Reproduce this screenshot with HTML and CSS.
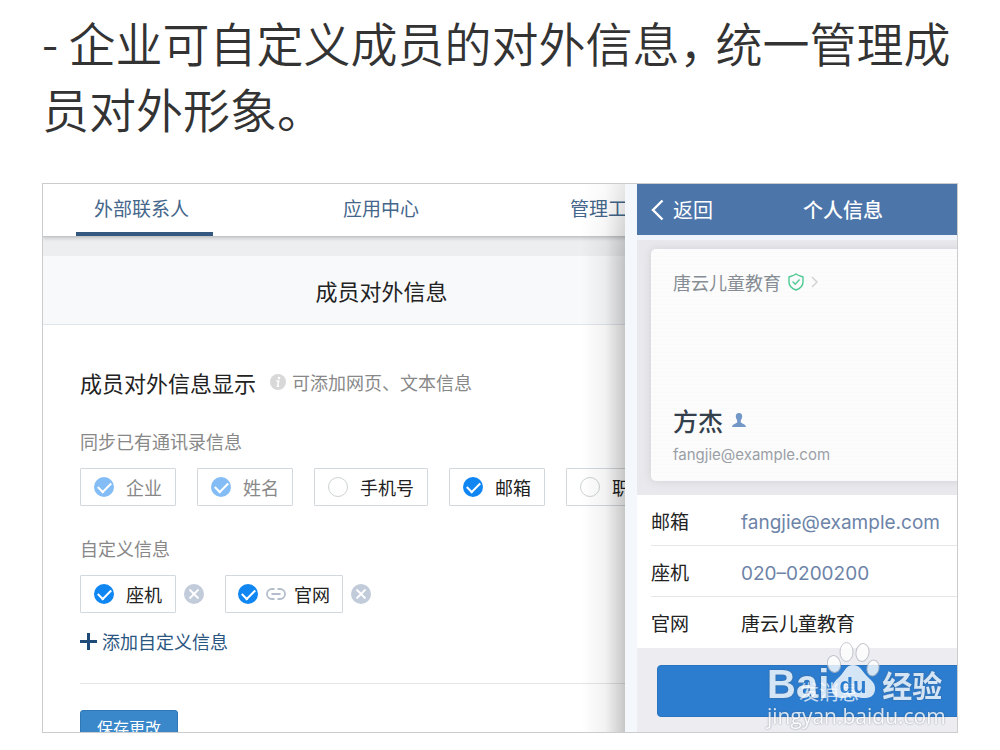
FILE: index.html
```html
<!DOCTYPE html>
<html lang="zh-CN">
<head>
    <meta charset="UTF-8">
    <meta name="viewport" content="width=device-width, initial-scale=1.0">
    <title>成员对外信息</title>
    <link rel="stylesheet" href="styles.css">
</head>
<body>
    <p class="intro">- 企业可自定义成员的对外信息<span class="comma">，</span>统一管理成员对外形象。</p>

    <div class="frame">
        <div class="admin">
            <div class="admin-page">
                <nav class="tabs">
                    <a class="tab active" href="#">外部联系人</a>
                    <a class="tab" href="#">应用中心</a>
                    <a class="tab" href="#">管理工具</a>
                </nav>
                <h1 class="page-title">成员对外信息</h1>

                <form class="settings">
                    <div class="settings-head">
                        <h2>成员对外信息显示</h2>
                        <svg class="info" width="16" height="16" viewBox="0 0 16 16">
                            <circle cx="8" cy="8" r="8" fill="#d8d8d8"/>
                            <circle cx="9" cy="4" r="1.3" fill="#fff"/>
                            <path d="M6.3 7H8.7L7.4 12.2H9.2" fill="none" stroke="#fff" stroke-width="1.5"/>
                        </svg>
                        <span class="hint">可添加网页、文本信息</span>
                    </div>

                    <h3>同步已有通讯录信息</h3>
                    <div class="chips">
                        <label class="chip"><input type="checkbox" checked disabled>企业</label>
                        <label class="chip"><input type="checkbox" checked disabled>姓名</label>
                        <label class="chip"><input type="checkbox">手机号</label>
                        <label class="chip"><input type="checkbox" checked>邮箱</label>
                        <label class="chip"><input type="checkbox">职务</label>
                    </div>

                    <h3>自定义信息</h3>
                    <div class="chips">
                        <div class="custom">
                            <label class="chip"><input type="checkbox" checked>座机</label>
                            <button type="button" class="remove" aria-label="删除座机">
                                <svg width="20" height="20" viewBox="0 0 20 20">
                                    <circle cx="10" cy="10" r="10" fill="#c1cbda"/>
                                    <path d="M5.5 5.5L14.5 14.5M14.5 5.5L5.5 14.5" stroke="#fff" stroke-width="1.8"/>
                                </svg>
                            </button>
                        </div>
                        <div class="custom">
                            <label class="chip has-link"><input type="checkbox" checked>
                                <svg width="20" height="12" viewBox="0 0 20 12" fill="none" stroke="#b3bdcc" stroke-width="1.8">
                                    <path d="M8.5 1H6A5 5 0 0 0 6 11H8.5M11.5 1H14A5 5 0 0 1 14 11H11.5M5.5 6H14.5"/>
                                </svg>官网</label>
                            <button type="button" class="remove" aria-label="删除官网">
                                <svg width="20" height="20" viewBox="0 0 20 20">
                                    <circle cx="10" cy="10" r="10" fill="#c1cbda"/>
                                    <path d="M5.5 5.5L14.5 14.5M14.5 5.5L5.5 14.5" stroke="#fff" stroke-width="1.8"/>
                                </svg>
                            </button>
                        </div>
                    </div>
                    <a class="add" href="#">
                        <svg width="17" height="17" viewBox="0 0 17 17"><path d="M8.5 0V17M0 8.5H17" stroke="#1d4a76" stroke-width="3"/></svg>
                        添加自定义信息
                    </a>
                    <hr>
                    <button type="submit" class="save">保存更改</button>
                </form>
            </div>
        </div>

        <div class="phone">
            <div class="screen">
                <header class="phone-bar">
                    <a class="back" href="#">
                        <svg width="13" height="22" viewBox="0 0 13 22"><path d="M11.5 1.5L2 11L11.5 20.5" fill="none" stroke="#fff" stroke-width="2.4"/></svg>
                        返回
                    </a>
                    <h2>个人信息</h2>
                </header>

                <div class="card-area">
                    <div class="card">
                        <a class="company" href="#">
                            唐云儿童教育
                            <svg width="16" height="18" viewBox="0 0 16 18" fill="none" stroke="#4fc993" stroke-width="1.4">
                                <path d="M8 1C10 2.6 12.4 3.1 15 3.9V9C15 12.8 12 15.6 8 17C4 15.6 1 12.8 1 9V3.9C3.6 3.1 6 2.6 8 1Z"/>
                                <path d="M4.6 8.6L7.2 11.2L11.6 6.6"/>
                            </svg>
                            <svg width="7" height="12" viewBox="0 0 7 12"><path d="M1 1L6 6L1 11" fill="none" stroke="#d2d2d2" stroke-width="1.5"/></svg>
                        </a>
                        <div>
                            <div class="name">
                                方杰
                                <svg width="14" height="14" viewBox="0 0 14 14" fill="#7398c8"><path d="M7 0C9.3 0 10.4 1.6 10.2 3.7C10.1 5.5 9 6.5 8.8 7.5V9.3C9.3 10.6 13.6 10.8 14 14H0C0.4 10.8 4.7 10.6 5.2 9.3V7.5C5 6.5 3.9 5.5 3.8 3.7C3.6 1.6 4.7 0 7 0Z"/></svg>
                            </div>
                            <div class="mail">fangjie@example.com</div>
                        </div>
                    </div>
                </div>

                <dl class="fields">
                    <div><dt>邮箱</dt><dd><a href="#">fangjie@example.com</a></dd></div>
                    <div><dt>座机</dt><dd><a href="#">020–0200200</a></dd></div>
                    <div><dt>官网</dt><dd>唐云儿童教育</dd></div>
                </dl>

                <div class="actions">
                    <button type="button" class="send">发消息</button>
                </div>
            </div>
        </div>

        <div class="watermark">
            <div class="brand">
                <span class="bai">Bai</span>
                <svg width="54" height="58" viewBox="0 0 54 58">
                    <g fill="#fff" stroke="#b4b8c0" stroke-width="1">
                        <ellipse cx="7" cy="23" rx="6.5" ry="8.5" transform="rotate(-12 7 23)"/>
                        <ellipse cx="19.5" cy="11" rx="6.5" ry="9.5"/>
                        <ellipse cx="35.5" cy="11.5" rx="6.5" ry="9" transform="rotate(10 35.5 11.5)"/>
                        <ellipse cx="46" cy="27" rx="6" ry="8" transform="rotate(12 46 27)"/>
                    </g>
                    <path d="M26 24C32 24 35 29 38 33C42 38 49 41 48 49C47 56 42 57 37 57C32 57 30 55.5 26 55.5C22 55.5 20 57 15 57C10 57 5 55 5 48C5 41 11 38 15 33C18 29 20 24 26 24Z" fill="#fff"/>
                    <text class="du" x="26" y="52" text-anchor="middle">du</text>
                </svg>
                <span class="jingyan">经验</span>
            </div>
            <div class="domain">jingyan.baidu.com</div>
        </div>
    </div>
</body>
</html>
```
FILE: styles.css
```css
* {
    box-sizing: border-box;
}
body {
    margin: 0;
    padding: 9px 42px;
    background: #fff;
    color: #222;
    font-family: "Noto Sans CJK SC", sans-serif;
}
h1, h2, h3, p, dl, dd {
    margin: 0;
    font-weight: 400;
}
a {
    color: inherit;
    text-decoration: none;
}
svg {
    flex: none;
}
button {
    font-family: inherit;
    border: none;
    cursor: pointer;
}
.intro {
    margin-bottom: 42px;
    font-size: 47px;
    font-weight: 350;
    line-height: 66px;
    color: #333;
}
.comma {
    margin-right: -11px;
}
.frame {
    position: relative;
    display: flex;
    height: 550px;
    border: 1px solid #cbcccd;
    overflow: hidden;
}

/* admin console */
.admin {
    position: relative;
    flex: 1;
    min-width: 0;
    overflow: hidden;
}
.admin::after {
    content: "";
    position: absolute;
    inset: 0 0 0 auto;
    width: 44px;
    background: linear-gradient(to right, rgba(0, 0, 0, 0), rgba(0, 0, 0, 0.05) 55%, rgba(0, 0, 0, 0.22));
    mask-image: linear-gradient(rgba(0, 0, 0, 0.4), #000 80px);
    pointer-events: none;
}
.admin-page {
    min-width: 677px;
}
.tabs {
    position: relative;
    display: flex;
    gap: 109px;
    height: 53px;
    padding-left: 33px;
    border-bottom: 1px solid #c4c6c8;
    box-shadow: 0 1px 4px rgba(0, 0, 0, 0.2);
}
.tab {
    flex: none;
    padding: 0 21px;
    border-bottom: 4px solid transparent;
    font-size: 19px;
    line-height: 48px;
    color: #44668a;
}
.tab.active {
    padding: 0 24px 0 18px;
    border-bottom-color: #34587f;
}
.page-title {
    border-top: 19px solid #eceeef;
    border-bottom: 1px solid #e0e5ea;
    background: #f8f9fb;
    font-size: 22px;
    line-height: 68px;
    text-align: center;
}
.settings {
    padding: 42px 0 0 37px;
}
.settings-head {
    display: flex;
    align-items: center;
    height: 30px;
}
.settings-head h2 {
    font-size: 22px;
}
.info {
    margin: 0 6px 0 14px;
}
.hint {
    font-size: 18px;
    color: #888;
}
.settings h3 {
    margin: 30px 0 15px;
    font-size: 18px;
    line-height: 24px;
    color: #888;
}
.settings-head + h3 {
    margin-top: 32px;
}
.chips {
    display: flex;
    gap: 21px;
}
.chip {
    flex: none;
    display: flex;
    align-items: center;
    gap: 12px;
    height: 38px;
    padding: 0 13px;
    border: 1px solid #d3d8dc;
    border-radius: 1px;
    font-size: 18px;
    line-height: 34px;
    color: #222;
}
.chip:has(input:disabled) {
    color: #888;
}
.chip.has-link {
    gap: 8px;
    padding: 0 12px;
}
.chip input {
    appearance: none;
    display: grid;
    place-items: center;
    width: 20px;
    height: 20px;
    margin: 0;
    border: 1px solid #cdd2d4;
    border-radius: 50%;
}
.chip input:checked {
    border: none;
    background: #0f86f2;
}
.chip input:checked::after {
    content: "";
    width: 11px;
    height: 6px;
    margin-bottom: 3px;
    border: solid #fff;
    border-width: 0 0 2px 2px;
    transform: rotate(-45deg);
}
.chip input:disabled {
    background: #84bdf5;
}
.custom {
    display: flex;
    align-items: center;
    gap: 8px;
}
.remove {
    display: flex;
    padding: 0;
    background: none;
}
.add {
    display: flex;
    align-items: center;
    gap: 5px;
    margin-top: 16px;
    font-size: 18px;
    line-height: 24px;
    color: #2b5681;
}
hr {
    margin: 30px 0 26px;
    border: none;
    border-top: 1px solid #e3e5e7;
}
.save {
    height: 36px;
    padding: 0 16px 2px;
    border: 1px solid #2f77b5;
    border-radius: 3px;
    background: #3a88ca;
    color: #fff;
    font-size: 16px;
}

/* phone preview */
.phone {
    flex: none;
    width: 332px;
    padding-left: 12px;
    background: #f4f7fb;
    overflow: hidden;
}
.screen {
    width: 384px;
    min-height: 100%;
    background: #ececf1;
}
.phone-bar {
    display: grid;
    grid-template-columns: 136px 1fr;
    align-items: center;
    height: 56px;
    padding-left: 14px;
    border-bottom: 5px solid #eff3fa;
    background: #4c75a9;
    color: #fff;
    font-size: 20px;
}
.phone-bar h2 {
    padding-left: 16px;
    font-size: 20px;
    font-weight: 500;
}
.back {
    display: flex;
    align-items: center;
    gap: 9px;
}
.card-area {
    padding: 9px 14px 14px;
    background: #e9e9ed;
}
.card {
    display: flex;
    flex-direction: column;
    justify-content: space-between;
    height: 232px;
    padding: 21px 22px 15px;
    border-radius: 5px;
    background: repeating-linear-gradient(#fcfcfc 0 3px, #fafafa 3px 4px);
    box-shadow: 0 0 8px rgba(60, 60, 80, 0.14);
}
.company {
    display: flex;
    align-items: center;
    gap: 7px;
    font-size: 18px;
    line-height: 24px;
    color: #868d94;
}
.name {
    display: flex;
    align-items: center;
    gap: 9px;
    margin-bottom: 6px;
    font-size: 25px;
    font-weight: 500;
    line-height: 36px;
    color: #35404d;
}
.mail {
    font-family: Inter, sans-serif;
    font-size: 15px;
    line-height: 22px;
    color: #9a9fa6;
}
.fields {
    padding-left: 14px;
    background: #fff;
    font-size: 19px;
}
.fields div {
    display: flex;
    height: 51px;
    align-items: center;
    border-bottom: 1px solid #e6e7ea;
}
.fields div:last-child {
    border-bottom: none;
}
.fields dt {
    width: 90px;
}
.fields a {
    font-family: Inter, sans-serif;
    color: #6d83a8;
}
.actions {
    padding: 17px 20px;
}
.send {
    width: 100%;
    height: 52px;
    border: 1px solid #2a73bd;
    border-radius: 4px;
    background: #2c7dcf;
    color: #c5dbf2;
    font-size: 20px;
}

/* site mark over the lower right corner */
.watermark {
    position: absolute;
    right: 8px;
    bottom: 4px;
    width: 182px;
    color: #fff;
    opacity: 0.8;
    text-shadow: 0 0 2px rgba(70, 80, 100, 0.8);
}
.brand {
    display: flex;
    align-items: flex-end;
}
.bai {
    font-family: "Liberation Sans", sans-serif;
    font-size: 40px;
    font-weight: 700;
    line-height: 40px;
}
.brand svg {
    margin: 0 0 5px -2px;
}
.du {
    fill: #2c7dcf;
    font-family: "Liberation Sans", sans-serif;
    font-size: 22px;
    font-weight: 700;
    text-shadow: none;
}
.jingyan {
    margin-left: 1px;
    font-size: 30px;
    font-weight: 700;
    line-height: 40px;
}
.domain {
    font-family: "Open Sans", sans-serif;
    font-size: 21px;
    line-height: 24px;
}
```
